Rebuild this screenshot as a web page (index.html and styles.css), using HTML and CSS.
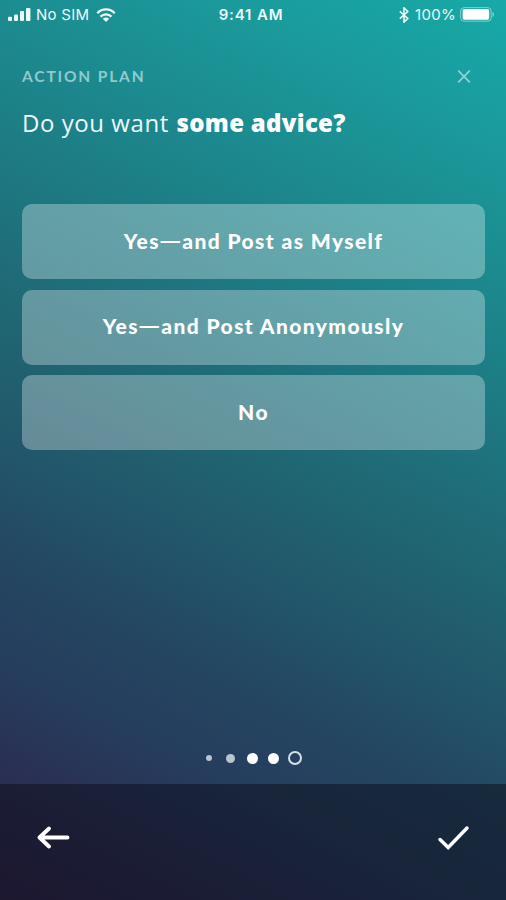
FILE: index.html
```
<!DOCTYPE html>
<html lang="en">
<head>
<meta charset="utf-8">
<title>Action Plan</title>
<link rel="stylesheet" href="styles.css">
</head>
<body>
<div class="screen">
  <header class="status">
    <div class="status-left">
      <svg class="signal" width="23" height="14" viewBox="0 0 23 14" fill="currentColor"><rect x="0" y="8.7" width="4" height="4.3" rx="1"/><rect x="6" y="6.4" width="4" height="6.6" rx="1"/><rect x="12" y="3" width="4" height="10" rx="1"/><rect x="18" y="0" width="4.4" height="13" rx="1"/></svg>
      <span class="carrier">No SIM</span>
      <svg class="wifi" width="20" height="15" viewBox="0 0 20 15" fill="none" stroke="currentColor" stroke-width="2.3"><path d="M1.3 5.2C6.1.2 13.9.2 18.7 5.2M4.5 8.6C7.5 5.6 12.5 5.6 15.5 8.6"/><path d="M10 14 6.8 10.8Q10 8 13.2 10.8Z" fill="currentColor" stroke="none"/></svg>
    </div>
    <span class="time">9:41 AM</span>
    <div class="status-right">
      <svg class="bluetooth" width="10" height="16" viewBox="0 0 10 16" fill="none" stroke="currentColor" stroke-width="1.6"><path d="M.8 4.3 8.8 11.5 5 15V1l3.8 3.5-8 7.2"/></svg>
      <span class="percent">100%</span>
      <svg class="battery" width="35" height="15" viewBox="0 0 35 15"><rect x=".6" y=".6" width="30.6" height="13.6" rx="3.5" fill="none" stroke="currentColor" stroke-opacity=".5"/><rect x="2.6" y="2" width="26.6" height="10.800" rx="1.8" fill="#fff"/><path d="M32.5 5v5c2-.8 2-4.2 0-5Z" fill="currentColor" fill-opacity=".5"/></svg>
    </div>
  </header>
  <main class="content">
    <div class="topline">
      <span class="label">ACTION PLAN</span>
      <svg class="close" width="14" height="14" viewBox="0 0 14 14" fill="none" stroke="currentColor" stroke-width="1.7"><path d="m1.2 1.700 11.600 11.600M12.800 1.700 1.200 13.300"/></svg>
    </div>
    <h1 class="question"><span class="light">Do you want</span> <strong>some advice?</strong></h1>
    <div class="choices">
      <button class="choice">Yes<span class="dash">—</span>and Post as Myself</button>
      <button class="choice">Yes<span class="dash">—</span>and Post Anonymously</button>
      <button class="choice">No</button>
    </div>
    <div class="steps">
      <i class="dot tiny"></i><i class="dot small"></i><i class="dot"></i><i class="dot"></i><i class="dot ring"></i>
    </div>
  </main>
  <footer class="bar">
    <svg class="back" width="34" height="24" viewBox="0 0 34 24" fill="none" stroke="currentColor" stroke-width="3.8" stroke-linecap="round" stroke-linejoin="round"><path d="M31.500 11.500H4M13 2.500 3.500 11.500l9.500 9"/></svg>
    <svg class="check" width="34" height="26" viewBox="0 0 34 26" fill="none" stroke="currentColor" stroke-width="3.5" stroke-linecap="round" stroke-linejoin="miter"><path d="m4 14.500 8.200 8L31 3"/></svg>
  </footer>
</div>
</body>
</html>
```
FILE: styles.css
```
* { box-sizing: border-box; }
body { margin: 0; }
.screen {
  width: 506px;
  height: 900px;
  display: flex;
  flex-direction: column;
  overflow: hidden;
  color: #fff;
  background: linear-gradient(207deg, #17aaa8 0%, #1b989a 14%, #1c898e 25%, #1e7680 38%, #206370 52%, #22566a 61%, #244661 71%, #263d5d 80%, #2b2d52 90%, #301f46 100%);
  font-family: Lato, "Liberation Sans", sans-serif;
}
.status {
  height: 30px;
  display: grid;
  grid-template-columns: 1fr auto 1fr;
  align-items: center;
  padding: 0 12px 0 8px;
  font: 15px/30px Inter, "Liberation Sans", sans-serif;
  color: #eefafa;
}
.status-left, .status-right { display: flex; align-items: center; }
.status-right { justify-content: flex-end; }
.status svg { display: block; }
.status .battery { position: relative; top: -1px; left: 1px; }
.carrier { margin-left: 5px; letter-spacing: 0.25px; }
.wifi { margin-left: 7px; }
.time { font-weight: 600; letter-spacing: 0.85px; }
.percent { margin: 0 3px 0 6px; letter-spacing: 0.3px; }
.content { height: 754px; padding: 0 21px 0 22px; display: flex; flex-direction: column; }
.topline { display: flex; justify-content: space-between; align-items: center; height: 20px; margin-top: 36px; padding-right: 14px; color: rgba(220, 246, 248, .62); }
.label { font-size: 15.5px; font-weight: 700; letter-spacing: 1.85px; }
.question { margin: 18px 0 0; font: 24px/38px "Open Sans", "Noto Sans", sans-serif; letter-spacing: 0.55px; white-space: nowrap; }
.light { font-weight: 400; color: #edf9fa; }
.question strong { margin-left: 1px; font-weight: 800; letter-spacing: 0.3px; }
.choices { display: grid; grid-template-rows: repeat(3, 75px); gap: 10.5px; margin-top: 62px; }
.choice { border: 0; border-radius: 10px; padding: 0 0 2px; background: rgba(255, 255, 255, .31); color: #fff; font: 900 21px/24px Lato, sans-serif; letter-spacing: 1.4px; }
.dash { display: inline-block; transform: translateY(-1px); font-family: "Open Sans", sans-serif; font-weight: 600; }
.steps { display: flex; align-items: center; justify-content: center; height: 16px; margin-top: auto; margin-bottom: 18px; padding-right: 3px; }
.dot { width: 11px; height: 11px; margin: 0 5.3px; border-radius: 50%; background: #fff; }
.tiny { width: 6px; height: 6px; margin: 0 7.8px; background: #b9c3d1; }
.small { width: 9px; height: 9px; margin: 0 6.3px; background: #bac3d0; }
.ring { width: 14px; height: 14px; margin: 0 3.8px; background: none; border: 2px solid #d5e2ea; }
.bar { height: 116px; display: flex; align-items: center; justify-content: space-between; padding: 0 36px; background: rgba(13, 17, 30, .54); }
.bar svg { position: relative; top: -4px; }
```
